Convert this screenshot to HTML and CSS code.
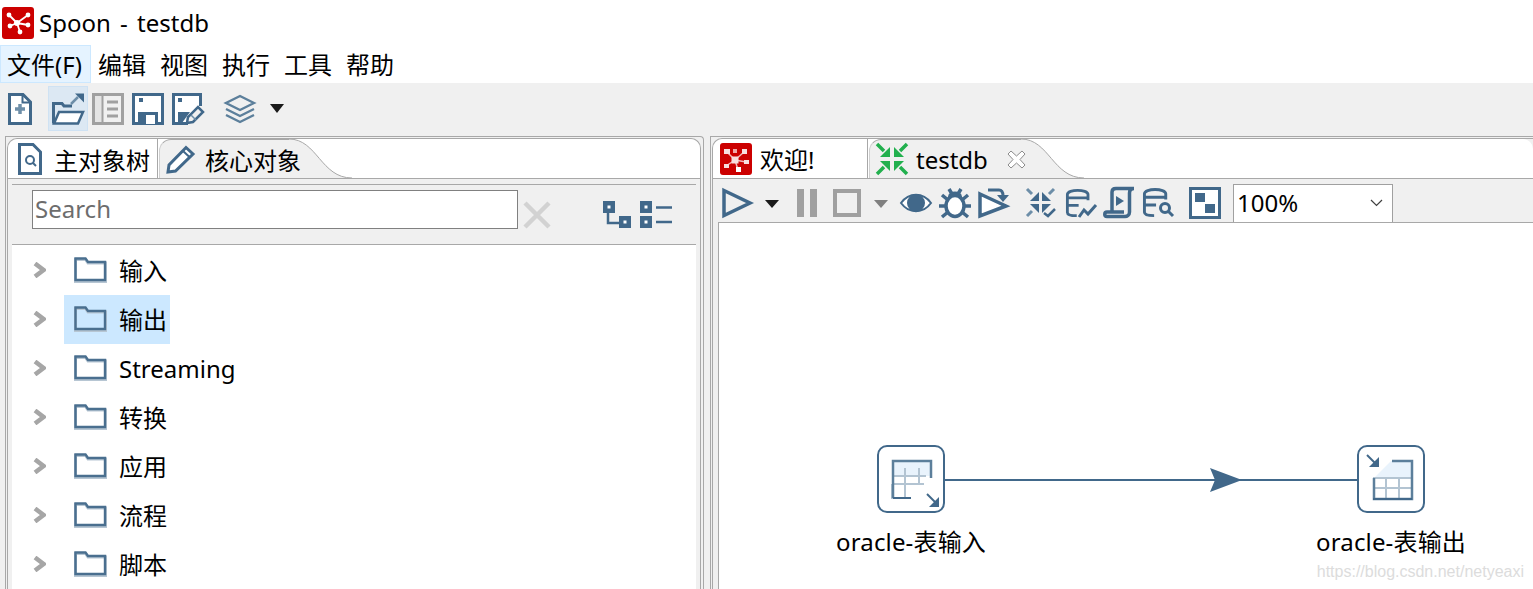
FILE: index.html
```html
<!DOCTYPE html>
<html lang="zh-CN">
<head>
    <meta charset="UTF-8">
    <title>Spoon - testdb</title>
    <link rel="stylesheet" href="styles.css">
</head>
<body>
    <svg class="defs" xmlns="http://www.w3.org/2000/svg">
        <symbol id="i-folder" viewBox="0 0 33 27">
            <path d="M1.5 25V2.5H11.5L14 6H31.5V25Z" fill="none" stroke="#b7c6d3" stroke-width="3" transform="translate(0 1)"/>
            <path d="M1.5 24V2.5H11.5L14 6H31V24Z" fill="none" stroke="#4a6f8f" stroke-width="2.4"/>
        </symbol>
        <symbol id="i-chevron" viewBox="0 0 13 16">
            <path d="M2 1.500L10.500 8L2 14.500" fill="none" stroke="#a6a6a6" stroke-width="4.500"/>
        </symbol>
        <symbol id="i-logo" viewBox="0 0 32 32">
            <rect width="32" height="32" rx="3" fill="#cc0000"/>
            <path d="M15 16L7 8M15 16L26 8M15 16L8 19M15 16L26 18M15 16L18 25" stroke="#fff" stroke-width="1.800"/>
            <circle cx="15" cy="16" r="3" fill="#fff"/>
            <circle cx="7" cy="8" r="2.400" fill="#fff"/>
            <circle cx="26" cy="8" r="2.400" fill="#fff"/>
            <circle cx="8" cy="19" r="2.400" fill="#fff"/>
            <circle cx="26" cy="18" r="2.400" fill="#fff"/>
            <circle cx="18" cy="25" r="2.400" fill="#fff"/>
        </symbol>
        <symbol id="i-tab-logo" viewBox="0 0 32 32">
            <rect width="32" height="32" rx="3" fill="#cc0000"/>
            <path d="M15 17L7 9M15 17L24 9M15 17L6 23M15 17L26 19M15 17L18 27" stroke="#f4b6b6" stroke-width="1.500"/>
            <rect x="11.500" y="13.500" width="7" height="7" fill="#f8dede"/>
            <rect x="4" y="6" width="6" height="5" fill="#f8dede"/>
            <rect x="13" y="6" width="4" height="4" fill="#f0a8a8"/>
            <rect x="22" y="6" width="5" height="5" fill="#f8dede"/>
            <rect x="4" y="21" width="5" height="4" fill="#f8dede"/>
            <rect x="24" y="17" width="5" height="4" fill="#f8dede"/>
            <rect x="16" y="24" width="5" height="5" fill="#ffffff"/>
        </symbol>
        <symbol id="i-db" viewBox="0 0 32 32">
            <path d="M2 26V7C2 1 24 1 24 7V13M2 10.500H24M2 18.500H14M2 26C2 29 7 29.500 12 29.500" fill="none" stroke="#41688a" stroke-width="3"/>
        </symbol>
    </svg>

    <div class="titlebar">
        <svg class="app-logo"><use href="#i-logo"/></svg>
        <span class="app-title">Spoon - testdb</span>
    </div>

    <div class="menubar">
        <span class="menu-item active">文件(F)</span>
        <span class="menu-item">编辑</span>
        <span class="menu-item">视图</span>
        <span class="menu-item">执行</span>
        <span class="menu-item">工具</span>
        <span class="menu-item">帮助</span>
    </div>

    <div class="toolbar">
        <div class="tool-btn">
            <svg width="24" height="32" viewBox="0 0 24 32"><path d="M1.500 1.500H15L22.500 9V30.500H1.500Z" fill="#fff" stroke="#41688a" stroke-width="3"/><path d="M14.500 2V9.500H22" fill="none" stroke="#41688a" stroke-width="2"/><path d="M12 11V21M7 16H17" stroke="#6d8ea8" stroke-width="3.500"/></svg>
        </div>
        <div class="tool-btn hover">
            <svg width="32" height="32" viewBox="0 0 32 32"><path d="M1.500 30.500V10.500H10L12 13H20" fill="none" stroke="#41688a" stroke-width="3"/><path d="M2 30.500L7 19H31L26 30.500Z" fill="#fff" stroke="#41688a" stroke-width="2.500"/><path d="M19 11L26 4" stroke="#6d8ea8" stroke-width="2.500"/><path d="M23 0.500H32V9.500Z" fill="#41688a"/></svg>
        </div>
        <div class="tool-btn">
            <svg width="32" height="32" viewBox="0 0 32 32"><rect x="1.500" y="1.500" width="29" height="29" fill="#e4e4e4" stroke="#a0a0a0" stroke-width="3"/><rect x="11" y="3" width="18" height="26" fill="#f0f0f0"/><path d="M10.500 3V29" stroke="#a0a0a0" stroke-width="2"/><path d="M15 9H26M15 16H26M15 23H26" stroke="#a0a0a0" stroke-width="3"/></svg>
        </div>
        <div class="tool-btn">
            <svg width="32" height="32" viewBox="0 0 32 32"><rect x="1.500" y="1.500" width="29" height="29" fill="#fff" stroke="#41688a" stroke-width="3"/><rect x="7" y="5" width="4" height="4" fill="#41688a"/><rect x="6" y="19" width="20" height="12" fill="#41688a"/><rect x="14" y="22" width="9" height="9" fill="#fff"/></svg>
        </div>
        <div class="tool-btn">
            <svg width="32" height="32" viewBox="0 0 32 32"><path d="M16 30.500H1.500V1.500H28.500V13" fill="#fff" stroke="#41688a" stroke-width="3"/><rect x="6" y="5" width="4" height="4" fill="#41688a"/><path d="M6 30V19H18L10 30Z" fill="#41688a"/><path d="M15 30L16 24L26 14L31 19L21 29Z" fill="#f0f0f0" stroke="#41688a" stroke-width="2.500"/><path d="M19 22L24 27" stroke="#6d8ea8" stroke-width="1.500"/></svg>
        </div>
        <div class="tool-btn layers">
            <svg width="32" height="30" viewBox="0 0 32 30"><path d="M16 2L30 9L16 16L2 9Z" fill="none" stroke="#5c7f9b" stroke-width="2.400"/><path d="M2 15L16 22L30 15M2 21L16 28L30 21" fill="none" stroke="#5c7f9b" stroke-width="2.400"/></svg>
        </div>
        <div class="tool-arrow"></div>
    </div>

    <div class="workspace">
        <div class="panel panel-left">
            <div class="panel-inner">
                <div class="tabs">
                    <div class="tab tab-active tab-objects">
                        <svg width="24" height="32" viewBox="0 0 24 32"><path d="M1.500 1.500H15L22.500 9V30.500H1.500Z" fill="#fff" stroke="#41688a" stroke-width="3"/><circle cx="12" cy="17" r="4" fill="none" stroke="#41688a" stroke-width="2"/><path d="M15 20L18 23" stroke="#41688a" stroke-width="2"/></svg>
                        <span>主对象树</span>
                    </div>
                    <div class="tab tab-rest tab-core">
                        <svg width="30" height="30" viewBox="0 0 30 30"><path d="M2 28L3 21L20 3.500L27 10L9.500 27Z" fill="#fff" stroke="#41688a" stroke-width="3"/><path d="M17 7L24 13.500" stroke="#41688a" stroke-width="2"/></svg>
                        <span>核心对象</span>
                    </div>
                    <svg class="tab-curve" width="63" height="40" viewBox="0 0 63 40"><path d="M0 0C28 0 32 39 63 39H0Z" fill="#f0f0f0"/><path d="M0 0C28 0 32 39 63 39" fill="none" stroke="#a8a8a8"/></svg>
                </div>
                <div class="panel-body">
                    <div class="search-row">
                        <div class="search-box">Search</div>
                        <svg class="search-clear" width="28" height="28" viewBox="0 0 28 28"><path d="M2 2L26 26M26 2L2 26" stroke="#d2d2d2" stroke-width="4.500"/></svg>
                        <svg class="view-tree" width="28" height="28" viewBox="0 0 28 28"><path d="M5 10V22H18" fill="none" stroke="#41688a" stroke-width="2.500"/><rect width="12" height="12" fill="#41688a"/><rect x="16" y="15" width="12" height="12" fill="#41688a"/><rect x="4.500" y="4.500" width="3" height="3" fill="#fff"/><rect x="20.500" y="19.500" width="3" height="3" fill="#fff"/></svg>
                        <svg class="view-list" width="32" height="28" viewBox="0 0 32 28"><rect width="12" height="12" fill="#41688a"/><rect y="15" width="12" height="12" fill="#41688a"/><rect x="4.500" y="4.500" width="3" height="3" fill="#fff"/><rect x="4.500" y="19.500" width="3" height="3" fill="#fff"/><path d="M16 6.500H32M16 21H32" stroke="#41688a" stroke-width="2.500"/></svg>
                    </div>
                    <ul class="tree">
                        <li class="tree-row"><svg class="chevron"><use href="#i-chevron"/></svg><div class="tree-item"><svg class="folder"><use href="#i-folder"/></svg><span>输入</span></div></li>
                        <li class="tree-row"><svg class="chevron"><use href="#i-chevron"/></svg><div class="tree-item selected"><svg class="folder"><use href="#i-folder"/></svg><span>输出</span></div></li>
                        <li class="tree-row"><svg class="chevron"><use href="#i-chevron"/></svg><div class="tree-item"><svg class="folder"><use href="#i-folder"/></svg><span>Streaming</span></div></li>
                        <li class="tree-row"><svg class="chevron"><use href="#i-chevron"/></svg><div class="tree-item"><svg class="folder"><use href="#i-folder"/></svg><span>转换</span></div></li>
                        <li class="tree-row"><svg class="chevron"><use href="#i-chevron"/></svg><div class="tree-item"><svg class="folder"><use href="#i-folder"/></svg><span>应用</span></div></li>
                        <li class="tree-row"><svg class="chevron"><use href="#i-chevron"/></svg><div class="tree-item"><svg class="folder"><use href="#i-folder"/></svg><span>流程</span></div></li>
                        <li class="tree-row"><svg class="chevron"><use href="#i-chevron"/></svg><div class="tree-item"><svg class="folder"><use href="#i-folder"/></svg><span>脚本</span></div></li>
                    </ul>
                </div>
            </div>
        </div>

        <div class="panel panel-right">
            <div class="panel-inner">
                <div class="tabs">
                    <div class="tab tab-active tab-welcome">
                        <svg class="tab-logo"><use href="#i-tab-logo"/></svg>
                        <span>欢迎!</span>
                    </div>
                    <div class="tab tab-rest tab-testdb">
                        <svg width="32" height="32" viewBox="0 0 32 32"><g fill="#22b04e"><path d="M14 14H4L14 4Z"/><path d="M18 14H28L18 4Z"/><path d="M14 18H4L14 28Z"/><path d="M18 18H28L18 28Z"/></g><path d="M1 1L8 8M31 1L24 8M1 31L8 24M31 31L24 24" stroke="#22b04e" stroke-width="3.500"/></svg>
                        <span>testdb</span>
                        <svg class="tab-close" width="19" height="19" viewBox="0 0 19 19"><path d="M4 1L9.500 6L15 1L18 4L13 9.500L18 15L15 18L9.500 13L4 18L1 15L6 9.500L1 4Z" fill="#fff" stroke="#8c8c8c"/></svg>
                    </div>
                    <svg class="tab-curve" width="63" height="40" viewBox="0 0 63 40"><path d="M0 0C28 0 32 39 63 39H0Z" fill="#f0f0f0"/><path d="M0 0C28 0 32 39 63 39" fill="none" stroke="#a8a8a8"/></svg>
                </div>
                <div class="panel-body">
                    <div class="run-toolbar">
                        <svg class="run-play" width="31" height="30" viewBox="0 0 31 30"><path d="M2 2.500L28 15L2 27.500Z" fill="none" stroke="#41688a" stroke-width="3.500"/></svg>
                        <div class="run-arrow"></div>
                        <svg class="run-pause" width="20" height="28" viewBox="0 0 20 28"><path d="M0 0H7V28H0ZM13 0H20V28H13Z" fill="#a0a0a0"/></svg>
                        <svg class="run-stop" width="28" height="28" viewBox="0 0 28 28"><rect x="2" y="2" width="24" height="24" fill="none" stroke="#a0a0a0" stroke-width="4"/></svg>
                        <div class="run-arrow muted"></div>
                        <svg class="run-eye" width="32" height="24" viewBox="0 0 32 24"><path d="M1 12C9 1 23 1 31 12C23 23 9 23 1 12Z" fill="#fff" stroke="#41688a" stroke-width="2"/><circle cx="16" cy="12" r="9" fill="#41688a"/></svg>
                        <svg class="run-bug" width="32" height="30" viewBox="0 0 32 30"><ellipse cx="16" cy="18" rx="9" ry="10.500" fill="#fff" stroke="#41688a" stroke-width="3.500"/><path d="M10 9C10 3 22 3 22 9" fill="#41688a" stroke="#41688a" stroke-width="2"/><path d="M10 1L13 6M22 1L19 6M3 7L9 12M29 7L23 12M0 18H7M32 18H25M3 29L9 24M29 29L23 24" fill="none" stroke="#41688a" stroke-width="3.500"/></svg>
                        <svg class="run-step" width="32" height="30" viewBox="0 0 32 30"><path d="M2 6L28 18L2 28Z" fill="#fff" stroke="#41688a" stroke-width="3.500"/><path d="M10 2H21C24 2 25 4 25 8" fill="none" stroke="#41688a" stroke-width="3"/><path d="M19 7H31L25 14Z" fill="#41688a"/></svg>
                        <svg class="run-check" width="30" height="30" viewBox="0 0 30 30"><g fill="#41688a"><path d="M13 13H4L13 4Z"/><path d="M16 13H25L16 4Z"/><path d="M13 16H4L13 25Z"/><path d="M16 16H25L16 25Z"/></g><path d="M1 1L6 6M28 1L23 6M1 28L6 23" stroke="#6d8ea8" stroke-width="3"/><path d="M18 25L22 28L29 21" fill="none" stroke="#41688a" stroke-width="2.500"/></svg>
                        <svg class="run-dbchart" width="33" height="30"><use href="#i-db"/><path d="M15 29L20 22L24 26L32 17" fill="none" stroke="#41688a" stroke-width="3"/></svg>
                        <svg class="run-scroll" width="32" height="31" viewBox="0 0 32 31"><path d="M9 25V5C9 2 11 1.500 13 1.500H31C28 1.500 26.500 3 26.500 6V25C26.500 28 24 29.500 22 29.500H4C1 29.500 1 25 4 25H21" fill="none" stroke="#41688a" stroke-width="3.500"/><path d="M13 9L21 14L13 19Z" fill="#41688a"/></svg>
                        <svg class="run-dbfind" width="32" height="31"><use href="#i-db"/><circle cx="23" cy="21" r="4.500" fill="#f0f0f0" stroke="#41688a" stroke-width="3"/><path d="M26.500 24.500L31 29" stroke="#41688a" stroke-width="3"/></svg>
                        <svg class="run-fit" width="32" height="32" viewBox="0 0 32 32"><rect x="1.500" y="1.500" width="29" height="29" fill="#fff" stroke="#41688a" stroke-width="3"/><rect x="6" y="6" width="10" height="9" fill="#41688a"/><rect x="16" y="17" width="10" height="9" fill="#41688a"/></svg>
                        <div class="zoom-select">
                            <span>100%</span>
                            <svg width="13" height="8" viewBox="0 0 13 8"><path d="M1 1L6.500 6.500L12 1" fill="none" stroke="#404040" stroke-width="1.200"/></svg>
                        </div>
                    </div>
                    <div class="canvas">
                        <svg class="hop" width="412" height="24" viewBox="0 0 412 24"><path d="M0 12H412" stroke="#41688a" stroke-width="2"/><path d="M265 0L297 12L265 24L270 12Z" fill="#41688a"/></svg>
                        <div class="step step-input">
                            <div class="step-icon">
                                <svg width="64" height="64" viewBox="0 0 64 64"><path d="M13 13H53V29H13Z" fill="#e9f3fc"/><path d="M13 37V51H31M13 29H47M13 37H45M26 21V50M40 21V37" fill="none" stroke="#b3c4d2" stroke-width="2"/><path d="M14 51V14H52V31" fill="none" stroke="#5c7f9b" stroke-width="2.500"/><path d="M14 51H32" stroke="#41688a" stroke-width="2"/><path d="M48 47L59 58" stroke="#41688a" stroke-width="2"/><path d="M60 50V60H50Z" fill="#41688a"/></svg>
                            </div>
                            <span class="step-label">oracle-表输入</span>
                        </div>
                        <div class="step step-output">
                            <div class="step-icon">
                                <svg width="64" height="64" viewBox="0 0 64 64"><path d="M14 32L32 14H53V32Z" fill="#e9f3fc"/><path d="M14 31H53M14 41H53M27 31V52M40 31V52" fill="none" stroke="#b3c4d2" stroke-width="2"/><path d="M15 31V52H53V14H33" fill="none" stroke="#5c7f9b" stroke-width="2.500"/><path d="M14 52H53" stroke="#41688a" stroke-width="2"/><path d="M8 8L18 18" stroke="#41688a" stroke-width="2"/><path d="M20 10V20H10Z" fill="#41688a"/></svg>
                            </div>
                            <span class="step-label">oracle-表输出</span>
                        </div>
                        <span class="watermark">https://blog.csdn.net/netyeaxi</span>
                    </div>
                </div>
            </div>
        </div>
    </div>
</body>
</html>
```

FILE: styles.css
```css
* { margin: 0; padding: 0; box-sizing: border-box; }
html, body { height: 589px; overflow: hidden; }
body { background-color: #ffffff; color: #000000; font-family: "Noto Sans", "Noto Sans CJK SC", sans-serif; font-size: 24px; line-height: 32px; display: flex; flex-direction: column; }
svg { display: block; flex-shrink: 0; overflow: visible; }
.defs { display: none; }

.titlebar { height: 45px; display: flex; align-items: center; padding-left: 2px; gap: 5px; flex-shrink: 0; }
.app-logo { width: 32px; height: 32px; }
.app-title { word-spacing: 3px; }

.menubar { height: 38px; display: flex; flex-shrink: 0; }
.menu-item { height: 38px; padding: 3px 6px 0; white-space: nowrap; border: 1px solid transparent; }
.menu-item:first-child { width: 91px; }
.menu-item.active { background-color: #e5f3ff; border-color: #cce8ff; }

.toolbar { height: 53px; flex-shrink: 0; background-color: #f0f0f0; display: flex; align-items: flex-start; padding-top: 3px; }
.tool-btn { width: 40px; height: 45px; display: flex; align-items: center; justify-content: center; }
.tool-btn:first-child { margin-right: 8px; }
.tool-btn.hover { background-color: #dce8f3; border: 1px solid #cfe2f3; }
.tool-btn.layers { margin-left: 12px; }
.tool-arrow { margin: 18px 0 0 10px; width: 0; height: 0; border-left: 7px solid transparent; border-right: 7px solid transparent; border-top: 9px solid #1a1a1a; }

.workspace { flex: 1; min-height: 0; display: flex; background-color: #f0f0f0; padding-left: 5px; gap: 6px; }
.panel { border: 1px solid #a8a8a8; border-bottom: none; padding: 1px 2px 0 1px; display: flex; }
.panel-left { width: 699px; flex-shrink: 0; border-top-right-radius: 4px; }
.panel-right { flex: 1; min-width: 0; border-right: none; padding-right: 0; }
.panel-inner { flex: 1; min-width: 0; border: 1px solid #a8a8a8; border-bottom: none; display: flex; flex-direction: column; border-radius: 10px 10px 0 0; }
.panel-right .panel-inner { border-right: none; border-top-right-radius: 0; }

.tabs { height: 40px; flex-shrink: 0; display: flex; border-bottom: 1px solid #a8a8a8; background-color: #ffffff; border-radius: 10px 10px 0 0; }
.tab { height: 39px; display: flex; align-items: center; white-space: nowrap; position: relative; z-index: 1; }
.tab-active { border-right: 1px solid #a8a8a8; border-top-left-radius: 10px; }
.tab-rest { background-color: #f0f0f0; margin-left: 1px; border-top-left-radius: 12px; border-top: 1px solid #a8a8a8; border-left: 1px solid #d0d0d0; }
.tab-objects { width: 150px; padding-left: 10px; gap: 13px; }
.tab-core { width: 130px; padding-left: 6px; gap: 10px; }
.panel-left .tab span { padding-top: 4px; margin-left: -1px; }
.panel-right .tab span { padding-top: 2px; }
.tab-welcome { width: 155px; padding-left: 7px; gap: 8px; }
.tab-logo { width: 32px; height: 32px; }
.tab-testdb { width: 152px; padding-left: 6px; gap: 8px; }
.tab-close { margin-left: 11px; }

.panel-body { flex: 1; min-height: 0; display: flex; flex-direction: column; background-color: #f0f0f0; }
.panel-left .panel-body { padding: 5px 4px 0; }
.panel-right .panel-body { padding-left: 5px; }

.search-row { height: 61px; flex-shrink: 0; border-top: 1px solid #a8a8a8; border-bottom: 1px solid #a8a8a8; display: flex; align-items: flex-start; padding: 5px 0 0 20px; }
.search-box { width: 486px; height: 39px; background-color: #ffffff; border: 1px solid #808080; padding: 2px 0 0 2px; color: #6d6d6d; }
.search-clear { margin: 11px 0 0 5px; }
.view-tree { margin: 11px 0 0 52px; }
.view-list { margin: 11px 0 0 9px; }

.tree { flex: 1; list-style: none; background-color: #ffffff; padding-top: 1px; overflow: hidden; }
.tree-row { height: 49px; display: flex; align-items: center; padding-left: 21px; }
.chevron { width: 13px; height: 16px; margin-bottom: 1px; }
.tree-item { height: 49px; margin-left: 18px; padding: 0 3px 0 10px; display: flex; align-items: center; gap: 12px; }
.tree-item.selected { background-color: #cce8ff; }
.folder { width: 33px; height: 27px; margin-bottom: 3px; }

.run-toolbar { height: 43px; flex-shrink: 0; display: flex; align-items: center; padding: 4px 0 0 4px; }
.run-arrow { margin: 2px 0 0 12px; width: 0; height: 0; border-left: 7px solid transparent; border-right: 7px solid transparent; border-top: 8px solid #1a1a1a; }
.run-arrow.muted { border-top-color: #808080; margin-left: 13px; }
.run-pause { margin-left: 18px; }
.run-stop { margin-left: 16px; }
.run-eye { margin-left: 12px; }
.run-bug { margin-left: 7px; }
.run-step { margin-left: 7px; }
.run-check { margin-left: 16px; }
.run-dbchart { margin-left: 8px; }
.run-scroll { margin-left: 6px; }
.run-dbfind { margin-left: 7px; }
.run-fit { margin-left: 15px; }
.zoom-select { width: 160px; height: 38px; margin: 1px 0 0 12px; align-self: flex-start; background-color: #ffffff; border: 1px solid #a0a0a0; border-bottom: none; display: flex; align-items: center; justify-content: space-between; padding: 0 9px 2px 3px; }

.canvas { flex: 1; min-height: 0; position: relative; background-color: #ffffff; border-top: 1px solid #a8a8a8; border-left: 1px solid #a8a8a8; overflow: hidden; }
.hop { position: absolute; left: 226px; top: 245px; }
.step { position: absolute; top: 222px; width: 68px; display: flex; flex-direction: column; align-items: center; gap: 13px; }
.step-input { left: 158px; }
.step-output { left: 638px; }
.step-icon { width: 68px; height: 68px; border: 2px solid #41688a; border-radius: 10px; background-color: #ffffff; }
.step-label { white-space: nowrap; letter-spacing: 0.15px; }
.watermark { position: absolute; right: 9px; bottom: 7px; font-family: "Liberation Sans", sans-serif; font-size: 16px; line-height: 20px; color: #dcdcdc; }
```
